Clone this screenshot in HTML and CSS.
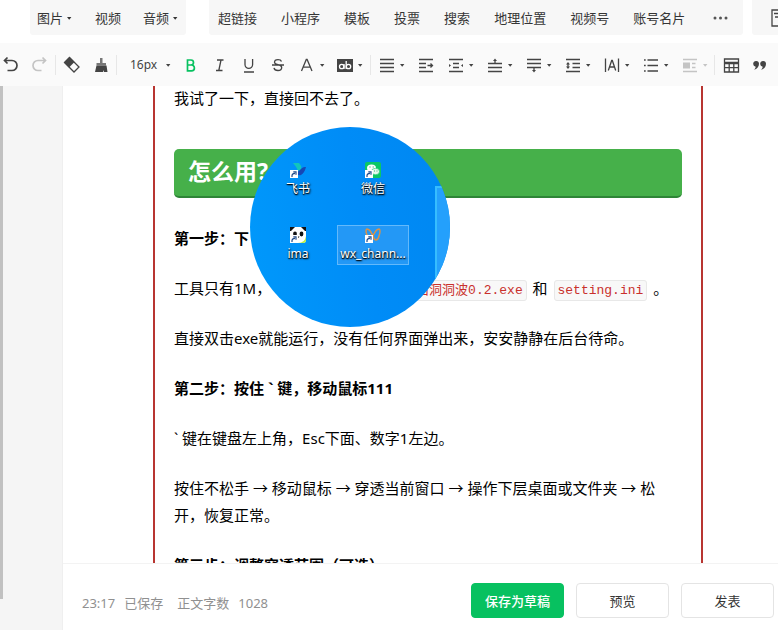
FILE: index.html
```html
<!DOCTYPE html>
<html lang="zh-CN">
<head>
<meta charset="utf-8">
<title>图文编辑</title>
<link rel="stylesheet" href="styles.css">
</head>
<body>
<svg width="0" height="0" class="defs" aria-hidden="true">
  <symbol id="caret" viewBox="0 0 8 8"><path d="M2 3h4.400L4.200 5.800z" fill="currentColor"/></symbol>
  <symbol id="shortcut" viewBox="0 0 8 8"><path d="M0 0h8v8H0z" fill="#fff"/><path d="M2 7V5.500Q2 3.500 5 3.300M3.300 1.800H6v2.900" fill="none" stroke="#234d8c" stroke-width="1.200"/></symbol>
</svg>
<nav class="menu">
  <div class="menu-group">
    <button type="button">图片<svg class="caret"><use href="#caret"/></svg></button>
    <button type="button">视频</button>
    <button type="button">音频<svg class="caret"><use href="#caret"/></svg></button>
  </div>
  <div class="menu-group links">
    <button type="button">超链接</button>
    <button type="button">小程序</button>
    <button type="button">模板</button>
    <button type="button">投票</button>
    <button type="button">搜索</button>
    <button type="button">地理位置</button>
    <button type="button">视频号</button>
    <button type="button">账号名片</button>
    <button type="button" class="more" aria-label="更多"><svg width="16" height="4" viewBox="0 0 16 4" fill="#555"><circle cx="2" cy="2" r="1.500"/><circle cx="7.500" cy="2" r="1.500"/><circle cx="13" cy="2" r="1.500"/></svg></button>
  </div>
  <div class="menu-group tail">
    <button type="button" aria-label="模板库"><svg width="18" height="18" viewBox="0 0 18 18" fill="none" stroke="#444" stroke-width="1.300"><path d="M1 1h16v16H1zM3 4.500h12M4 8h5"/></svg></button>
  </div>
</nav>

<div class="toolbar" role="toolbar">
  <div class="tools first">
    <button type="button" aria-label="撤销"><svg viewBox="0 0 20 20"><path d="M6.500 2.500 3.500 5.500l3 3M3.500 5.500H11a5 5 0 0 1 0 10H6.500" class="s2"/></svg></button>
    <button type="button" aria-label="重做" class="off"><svg viewBox="0 0 20 20"><path d="M12.500 2.500l3 3-3 3M15.500 5.500H8a5 5 0 0 0 0 10h3.500" class="s2"/></svg></button>
  </div>
  <div class="tools">
    <button type="button" aria-label="清除格式"><svg viewBox="0 0 20 20"><path d="M7.500 2.500 17 12l-5 5-9.500-9.500z" class="s"/><path d="M7.500 2 12.500 7l-5.500 5.500-5-5z" fill="currentColor"/></svg></button>
    <button type="button" aria-label="格式刷"><svg viewBox="0 0 20 20"><path d="M9 3h2.500v5H15v2.500H5.500V8H9z" fill="#777"/><path d="M5.500 10.500H15.500L16.500 17H13l-.5-2-.5 2H4z" fill="currentColor"/></svg></button>
  </div>
  <div class="tools text">
    <label class="size"><select aria-label="字号"><option>16px</option></select><svg class="caret"><use href="#caret"/></svg></label>
    <button type="button" aria-label="加粗" class="on"><svg viewBox="0 0 20 20"><path d="M6.500 5H10a2.500 2.500 0 0 1 0 5H6.500zM6.500 10h4a2.900 2.900 0 0 1 0 5.800h-4z" class="s2"/></svg></button>
    <button type="button" aria-label="斜体"><svg viewBox="0 0 20 20"><path d="M7 5h6.500M6 15.500h6.500M11 5 8.800 15.500" class="s"/></svg></button>
    <button type="button" aria-label="下划线"><svg viewBox="0 0 20 20"><path d="M6 4v5.500a3.800 3.800 0 0 0 7.600 0V4M5 17h10" class="s"/></svg></button>
    <button type="button" aria-label="删除线"><svg viewBox="0 0 20 20"><path d="M13.500 6.500C13 5 11.500 4.600 10 4.600c-2 0-3.500 1-3.500 2.700 0 3.300 7.200 1.500 7.200 5.200 0 2-1.700 3-3.700 3S6.300 14.600 6 12.800M4 10h12" class="s"/></svg></button>
    <button type="button" aria-label="字体颜色"><svg viewBox="0 0 20 20"><path d="M4.500 16 9.300 4.500h.8L15 16M6.400 12.200h6.700" class="s"/></svg><svg class="caret"><use href="#caret"/></svg></button>
    <button type="button" aria-label="背景色"><svg viewBox="0 0 20 20"><path d="M2 4h16v13H2z" fill="currentColor"/><g fill="none" stroke="#fff" stroke-width="1.300"><circle cx="6.700" cy="11.500" r="2.200"/><path d="M9 9v5M11.200 6v8"/><circle cx="13.500" cy="11.500" r="2.200"/></g></svg><svg class="caret"><use href="#caret"/></svg></button>
  </div>
  <div class="tools layout">
    <button type="button" aria-label="对齐"><svg viewBox="0 0 20 20"><path d="M3 4.500h14M3 8.500h14M3 12.500h14M3 16.500h14" class="s"/></svg><svg class="caret"><use href="#caret"/></svg></button>
    <button type="button" aria-label="首行缩进"><svg viewBox="0 0 20 20"><path d="M3 4.500h14M3 8.500h7M3 12.500h7M3 16.500h14M11.500 10.500h5M14.500 8.500l2 2-2 2" class="s"/></svg></button>
    <button type="button" aria-label="两端缩进"><svg viewBox="0 0 20 20"><path d="M3 4.500h14M7 8.500h6M7 12.500h6M3 16.500h14" class="s"/><path d="M3 9 5 10.500 3 12zM17 9 15 10.500 17 12z" fill="currentColor"/></svg><svg class="caret"><use href="#caret"/></svg></button>
    <button type="button" aria-label="段前距"><svg viewBox="0 0 20 20"><path d="M3 8.500h14M3 12.500h14M3 16.500h14M10 5v3" class="s"/><path d="M8 6 10 3.500l2 2.500z" fill="currentColor"/></svg><svg class="caret"><use href="#caret"/></svg></button>
    <button type="button" aria-label="段后距"><svg viewBox="0 0 20 20"><path d="M3 4.500h14M3 8.500h14M3 12.500h14M10 12.500v3" class="s"/><path d="M8 15l2 2.500 2-2.500z" fill="currentColor"/></svg><svg class="caret"><use href="#caret"/></svg></button>
    <button type="button" aria-label="行间距"><svg viewBox="0 0 20 20"><path d="M3 4.500h14M9.500 8.500H17M9.500 12.500H17M3 16.500h14M5 8v5" class="s"/><path d="M3 9.500 5 7l2 2.500zM3 11.500 5 14l2-2.500z" fill="currentColor"/></svg><svg class="caret"><use href="#caret"/></svg></button>
    <button type="button" aria-label="字间距"><svg viewBox="0 0 20 20"><path d="M3.500 3.500v13.500M16.500 3.500v13.500M6.300 15.500 9.700 5.500h.6l3.400 10M7.500 12h5" class="s"/></svg><svg class="caret"><use href="#caret"/></svg></button>
    <button type="button" aria-label="列表"><svg viewBox="0 0 20 20"><path d="M6.500 5H17M6.500 10.500H17M6.500 16H17M3 5h1.700M3 10.500h1.700M3 16h1.700" class="s"/></svg><svg class="caret"><use href="#caret"/></svg></button>
    <button type="button" aria-label="图文环绕" class="off"><svg viewBox="0 0 20 20"><path d="M3 4.500h14M12 8.500h3.500M12 12.500h3.500M3 16.500h14" class="s"/><path d="M3 7.500h7v6H3z" fill="currentColor"/></svg><svg class="caret"><use href="#caret"/></svg></button>
  </div>
  <div class="tools last">
    <button type="button" aria-label="表格"><svg viewBox="0 0 20 20"><path d="M3.500 4h14v13h-14zM3.500 8.500h14M3.500 12.700h14M8.200 8.500V17M12.800 8.500V17M3.500 7.500h14" class="s"/></svg></button>
    <button type="button" aria-label="引用"><svg viewBox="0 0 20 20" fill="currentColor"><path d="M9 8.800a2.900 2.900 0 1 0-3.300 2.900c-.2 1.300-.8 2.200-1.900 3.100C7.300 14 9 11.800 9 8.800zM16 8.800a2.900 2.900 0 1 0-3.300 2.900c-.2 1.300-.8 2.200-1.900 3.100C14.300 14 16 11.800 16 8.800z"/></svg></button>
  </div>
</div>

<div class="workspace">
  <aside class="gutter"><div class="thumb"></div></aside>
  <main class="editor">
    <div class="scroll">
      <article class="article">
        <p>我试了一下，直接回不去了。</p>
        <h2>怎么用?</h2>
        <p><strong>第一步：下&ensp;载</strong></p>
        <p>工具只有1M，&emsp;解压后有两个文件 <code>启洞洞波0.2.exe</code> 和 <code>setting.ini</code> 。</p>
        <p>直接双击exe就能运行，没有任何界面弹出来，安安静静在后台待命。</p>
        <p><strong>第二步：按住 ` 键，移动鼠标111</strong></p>
        <p>` 键在键盘左上角，Esc下面、数字1左边。</p>
        <p>按住不松手 → 移动鼠标 → 穿透当前窗口 → 操作下层桌面或文件夹 → 松开，恢复正常。</p>
        <p><strong>第三步：调整穿透范围（可选）</strong></p>
      </article>
    </div>
    <footer class="actions">
      <div class="status"><span>23:17</span><span>已保存</span><span class="count">正文字数</span><span>1028</span></div>
      <button type="button" class="primary">保存为草稿</button>
      <button type="button">预览</button>
      <button type="button">发表</button>
    </footer>
  </main>
</div>

<div class="lens">
  <div class="behind"></div>
  <div class="desktop">
    <div class="shortcut">
      <svg viewBox="0 0 16 16"><path d="M3 1h6q3 3 2.500 6L8 9Q6 4 3 1z" fill="#12c5bb"/><path d="M5 11Q10 9 12 6q2-1.500 4-1-1.500 6-5 8-3 1-6-2z" fill="#1747b5"/><use href="#shortcut" y="8" width="8" height="8"/></svg>
      <span>飞书</span>
    </div>
    <div class="shortcut">
      <svg viewBox="0 0 16 16"><rect width="16" height="16" rx="2" fill="#0cc765"/><ellipse cx="6.500" cy="6" rx="4.500" ry="3.600" fill="#fff"/><ellipse cx="10.500" cy="9.500" rx="4" ry="3.200" fill="#e6faef" stroke="#0cc765" stroke-width=".6"/><path d="M4.500 5h1M7.700 5h1M9 9h.8M11.600 9h.8" stroke="#0a9e50"/><use href="#shortcut" y="8" width="8" height="8"/></svg>
      <span>微信</span>
    </div>
    <div class="shortcut">
      <svg viewBox="0 0 16 16"><rect width="16" height="16" rx="3" fill="#fff"/><path d="M8 16q7 0 8-7v4q0 3-3 3z" fill="#b9ef45"/><path d="M0 0h5L1 4H0zM16 0h-5l4 4h1z" fill="#111"/><ellipse cx="5" cy="7" rx="1.900" ry="2.400" fill="#111"/><ellipse cx="11.500" cy="7" rx="1.900" ry="2.400" fill="#111"/><path d="M7.500 9.500h2l-1 1.500z" fill="#111"/><use href="#shortcut" y="8" width="8" height="8"/></svg>
      <span>ima</span>
    </div>
    <div class="shortcut selected">
      <svg viewBox="0 0 16 16"><path d="M8 9Q5 2 2 2 0 3 2 8q1 4 3 5 2 0 3-4zM8 9q3-7 6-7 2 1 0 7-1 4-3 4-2 0-3-4z" fill="none" stroke="#d9924a" stroke-width="1.500"/><use href="#shortcut" y="8" width="8" height="8"/></svg>
      <span>wx_chann...</span>
    </div>
  </div>
</div>
</body>
</html>
```

FILE: styles.css
```css
* { box-sizing: border-box; }
html, body { height: 100%; }
body {
  margin: 0;
  display: flex;
  flex-direction: column;
  overflow: hidden;
  position: relative;
  background: #fff;
  color: #000;
  font: 13px/20px "Noto Sans", "Noto Sans CJK SC", sans-serif;
}
button, select { font: inherit; color: inherit; border: 0; background: none; padding: 0; margin: 0; }
.defs { position: absolute; }
.caret { width: 8px; height: 8px; flex: none; }

.menu { display: flex; flex: none; height: 43px; padding-left: 30px; color: #353535; }
.menu-group { display: flex; align-items: center; flex: none; gap: 24px; height: 35px; padding: 0 6px 0 7px; background: #f7f7f7; border-radius: 0 0 3px 3px; }
.menu-group button { display: flex; align-items: center; gap: 2px; white-space: nowrap; }
.menu-group:first-child { gap: 22px; padding-right: 7px; }
.links { margin-left: 23px; padding: 0 14px 0 9px; }
.more { margin-left: 4px; }
.tail { margin-left: 9px; padding-left: 19px; }

.toolbar { display: flex; flex: none; align-items: center; height: 43px; background: #fafafa; color: #444; }
.tools { display: flex; flex: none; align-items: center; gap: 9px; height: 20px; padding: 0 5px 0 6px; border-right: 1px solid #e7e7e7; }
.tools.first { padding-left: 1px; }
.tools.text { padding: 0 6px 0 13px; }
.tools.layout { gap: 10px; }
.tools.last { border: 0; }
.tools button { display: flex; align-items: center; gap: 1px; height: 20px; }
.tools button svg:first-child { width: 20px; height: 20px; }
.s, .s2 { fill: none; stroke: currentColor; stroke-width: 1.3; }
.s2 { stroke-width: 1.7; }
.off { color: #c4c4c4; }
.on { color: #07c160; }
.size { display: flex; align-items: center; font-size: 12px; }
.size select { width: 34px; appearance: none; }

.workspace { display: flex; flex: 1; min-height: 0; }
.gutter { flex: none; width: 63px; background: #f5f5f5; border-right: 1px solid #efefef; }
.thumb { width: 3px; height: 94.3%; background: #c1c1c1; }
.editor { display: flex; flex: 1; flex-direction: column; min-width: 0; }
.scroll { flex: 1; min-height: 0; overflow: hidden; padding: 0 75px 0 90px; }
.article { max-width: 550px; margin-top: -1px; padding: 0 19px; border: solid #b83531; border-width: 0 2px; font-size: 15px; line-height: 27px; }
.article p { margin: 0 0 23px; }
.article h2 {
  margin: 37px 0 27px;
  padding: 7px 14px 9px;
  border-bottom: 2px solid #2e8537;
  border-radius: 5px;
  background: #46b04a;
  color: #fff;
  font-size: 23px;
  line-height: 31px;
}
code {
  margin: 0 2px;
  padding: 2px 3px;
  border: 1px solid #e8e8e8;
  border-radius: 3px;
  background: #f8f8f8;
  color: #c9302c;
  font: 13px/17px "Liberation Mono", "Noto Sans CJK SC", monospace;
}

.actions { display: flex; flex: none; align-items: center; gap: 12px; padding: 19px 4px 12px 19px; border-top: 1px solid #f3f3f3; background: #fff; }
.status { display: flex; flex: 1; gap: 9px; padding-top: 5px; color: #909090; }
.count { margin-left: 5px; }
.actions button { width: 93px; height: 35px; border: 1px solid #e4e4e4; border-radius: 4px; color: #353535; }
.actions .primary { border-color: #07c160; background: #07c160; color: #fff; font-weight: 500; }

.lens { position: absolute; left: 250px; top: 127px; width: 200px; height: 200px; overflow: hidden; border-radius: 50%; background: linear-gradient(80deg, #0099fb, #008cf7 55%, #0087f1); }
.behind { position: absolute; left: 185px; top: 59px; width: 60px; height: 96px; border: 2px solid #36bdff; background: #24a0fc; }
.desktop { display: grid; grid-template-columns: 72px 72px; gap: 25px 3px; padding: 33px 12px; }
.shortcut { display: flex; flex-direction: column; align-items: center; height: 40px; padding-top: 1px; border: 1px solid transparent; color: #fff; font-size: 12px; line-height: 22px; text-shadow: 1px 1px 2px #000, 0 1px 1px #000; }
.shortcut svg { flex: none; width: 16px; height: 16px; }
.selected { border-color: #63b9fb; background: #2398f6; }
```
